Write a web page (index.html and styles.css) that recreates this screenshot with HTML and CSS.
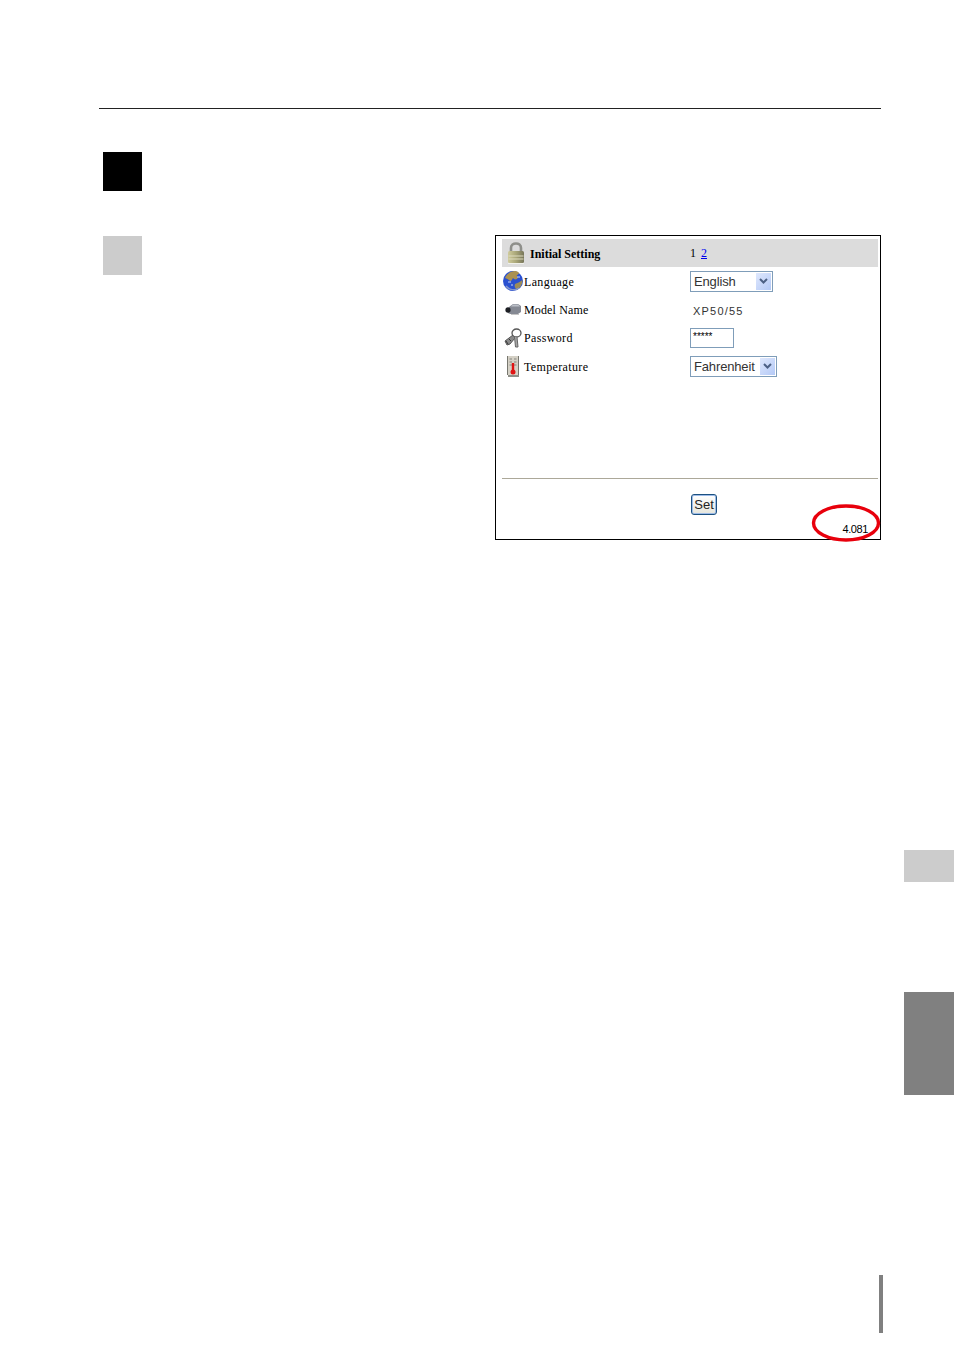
FILE: index.html
```html
<!DOCTYPE html>
<html lang="en">
<head>
    <meta charset="UTF-8">
    <meta name="viewport" content="width=device-width, initial-scale=1.0">
    <title>Initial Setting</title>
    <link rel="stylesheet" href="styles.css">
</head>
<body>
    <div class="page">
        <div class="top-rule"></div>
        <div class="square square-black"></div>

        <div class="step-row">
            <div class="square square-grey"></div>

            <div class="panel">
                <div class="panel-head">
                    <div class="cell-label head-label">
                        <svg class="icon-lock" width="22" height="24" viewBox="0 0 22 24">
                            <defs>
                                <linearGradient id="lockBody" x1="0" y1="0" x2="1" y2="0">
                                    <stop offset="0" stop-color="#cfcb9c"/>
                                    <stop offset="0.5" stop-color="#a9a678"/>
                                    <stop offset="1" stop-color="#77765a"/>
                                </linearGradient>
                            </defs>
                            <path d="M6 11V7c0-6 10-6 10 0v4" fill="none" stroke="#8e8f8a" stroke-width="2.6"/>
                            <rect x="3" y="10" width="16" height="12" rx="1.5" fill="url(#lockBody)"/>
                            <path d="M3.5 15h15M3.5 18h15" stroke="#dedcc0" stroke-width="1"/>
                            <path d="M3 22.5h16" stroke="#f0f0ea" stroke-width="1"/>
                        </svg>
                        <span class="label-text">Initial Setting</span>
                    </div>
                    <div class="pages">1 <a href="#">2</a></div>
                </div>

                <div class="row">
                    <div class="cell-label">
                        <span class="icon-box">
                            <svg width="22" height="22" viewBox="0 0 22 22">
                                <circle cx="11" cy="11" r="10" fill="#2a50d0"/>
                                <path d="M3 8c2-5 8-8 12-6.5 3 1 2 3 0 3.5-1 2 2 2 0 4-2 1-3 0-4-1-1 1-1 3-3 3-1-1-2-2-5-3z" fill="#ab9150"/>
                                <path d="M13 14c2-1 5-2 7.5-4 0 4-2 8-5.500 9.500-2-1-3-3-2-5.500z" fill="#9d8c58"/>
                                <path d="M4 16c3 4 9 5 13 2" fill="none" stroke="#8697cc" stroke-width="1.4"/>
                                <path d="M6 12h3M9 15h2M15 7h3" stroke="#c9d4f5" stroke-width="1"/>
                            </svg>
                        </span>
                        <span class="label-text">Language</span>
                    </div>
                    <div class="select select-language">
                        <span class="select-text">English</span>
                        <span class="select-arrow">
                            <svg width="9" height="6" viewBox="0 0 9 6"><path d="M1 1l3.5 3.5L8 1" fill="none" stroke="#4d6185" stroke-width="2"/></svg>
                        </span>
                    </div>
                </div>

                <div class="row">
                    <div class="cell-label">
                        <span class="icon-box">
                            <svg width="18" height="13" viewBox="0 0 18 13">
                                <path d="M5 4l4-3h5l3 2v6l-3 2H6L4 10z" fill="#858993"/>
                                <path d="M9 1.5h5l2 2H7z" fill="#bcc0c8"/>
                                <ellipse cx="4" cy="7" rx="2.6" ry="2.8" fill="#1d1f24"/>
                                <path d="M7 11.5h8" stroke="#c4c4c4" stroke-width="1"/>
                            </svg>
                        </span>
                        <span class="label-text label-model">Model Name</span>
                    </div>
                    <div class="model-value">XP50/55</div>
                </div>

                <div class="row">
                    <div class="cell-label">
                        <span class="icon-box">
                            <svg width="20" height="20" viewBox="0 0 20 20">
                                <path d="M10 7L2 13l2 4 3-1 5-6" fill="#8a8a8a" stroke="#555" stroke-width="1"/>
                                <ellipse cx="13.5" cy="5" rx="4.5" ry="4" fill="none" stroke="#555" stroke-width="1.3"/>
                                <path d="M11.5 9l1 10H15l-1-10" fill="#a5a5a5" stroke="#666" stroke-width="1"/>
                                <path d="M3 13l2 3M6 11l2 2" stroke="#333" stroke-width="1"/>
                            </svg>
                        </span>
                        <span class="label-text">Password</span>
                    </div>
                    <div class="password-box">*****</div>
                </div>

                <div class="row">
                    <div class="cell-label">
                        <span class="icon-box">
                            <svg width="12" height="21" viewBox="0 0 12 21">
                                <rect x="1" y="0" width="10" height="19" fill="#d5d1c6"/>
                                <rect x="1" y="19" width="11" height="2" fill="#8f8f88"/>
                                <path d="M2.5 3H5M7 3h2.500M2.500 6H5M7 6h2.500M2.500 9H5M7 9h2.500" stroke="#85857e" stroke-width="1"/>
                                <path d="M6 7v9" stroke="#e01414" stroke-width="2.4"/>
                                <circle cx="6" cy="16" r="2.5" fill="#e01414"/>
                                <path d="M11.5 0v19M.5 0v19" stroke="#77776f" stroke-width="1"/>
                            </svg>
                        </span>
                        <span class="label-text">Temperature</span>
                    </div>
                    <div class="select select-temp">
                        <span class="select-text">Fahrenheit</span>
                        <span class="select-arrow">
                            <svg width="9" height="6" viewBox="0 0 9 6"><path d="M1 1l3.5 3.5L8 1" fill="none" stroke="#4d6185" stroke-width="2"/></svg>
                        </span>
                    </div>
                </div>

                <div class="panel-rule"></div>
                <button class="set-btn" type="button">Set</button>
                <div class="version">4.081</div>

                <svg class="version-mark" width="70" height="38" viewBox="0 0 70 38">
                    <ellipse cx="35" cy="19" rx="32.5" ry="17" fill="none" stroke="#e8000c" stroke-width="3.4"/>
                </svg>
            </div>
        </div>

        <div class="side-tabs">
            <div class="tab tab-light"></div>
            <div class="tab tab-dark"></div>
            <div class="page-bar"></div>
        </div>
    </div>
</body>
</html>
```

FILE: styles.css
```css
body {
    margin: 0;
    background: #fff;
    color: #000;
    font-family: "Liberation Serif", serif;
}

.page {
    height: 1351px;
    overflow: hidden;
    padding-top: 108px;
    box-sizing: border-box;
}

.top-rule {
    height: 1px;
    width: 782px;
    margin-left: 99px;
    background: #222;
}

.square {
    width: 39px;
    height: 39px;
    margin-left: 103px;
}

.square-black {
    margin-top: 43px;
    background: #000;
}

.square-grey {
    margin-top: 1px;
    background: #ccc;
}

.step-row {
    display: flex;
    justify-content: space-between;
    width: 881px;
    margin-top: 44px;
}

/* browser screenshot box */
.panel {
    position: relative;
    width: 386px;
    height: 305px;
    box-sizing: border-box;
    border: 1px solid #000;
    padding: 3px 2px 0 6px;
    font-size: 12px;
}

.panel-head, .row {
    display: grid;
    grid-template-columns: 188px 1fr;
    align-items: center;
}

.panel-head {
    height: 28px;
    background: #dcdcdc;
}

.row {
    height: 28.4px;
}

.cell-label {
    display: flex;
    align-items: center;
    letter-spacing: 0.35px;
}

.label-text {
    padding-top: 2px;
}

.label-model {
    letter-spacing: 0.15px;
}

.head-label {
    font-weight: bold;
    letter-spacing: 0;
    padding-left: 3px;
    gap: 3px;
}

.icon-box {
    display: flex;
    justify-content: center;
    align-items: center;
    width: 22px;
    height: 22px;
}

.pages {
    font-size: 12px;
    word-spacing: 2px;
}

.pages a {
    color: #0000ee;
}

.select {
    display: flex;
    align-items: center;
    justify-content: space-between;
    height: 21px;
    box-sizing: border-box;
    border: 1px solid #7f9db9;
    background: #fff;
    padding: 1px;
    font-family: "Liberation Sans", sans-serif;
    font-size: 13px;
    letter-spacing: -0.15px;
    color: #333;
}

.select-language {
    width: 83px;
}

.select-temp {
    width: 87px;
}

.select-text {
    padding-left: 2px;
}

.select-arrow {
    display: flex;
    align-items: center;
    justify-content: center;
    width: 15px;
    height: 17px;
    background: linear-gradient(135deg, #dfe8fd, #b4c9f6);
}

.model-value {
    padding: 2px 0 0 3px;
    font-family: "Liberation Sans", sans-serif;
    font-size: 11px;
    letter-spacing: 1.2px;
    color: #333;
}

.password-box {
    width: 44px;
    height: 20px;
    box-sizing: border-box;
    border: 1px solid #7f9db9;
    padding: 3px 0 0 2px;
    font-family: "Liberation Sans", sans-serif;
    font-size: 10px;
    line-height: 10px;
}

.panel-rule {
    height: 1px;
    margin-top: 97px;
    background: #aca899;
}

.set-btn {
    display: block;
    width: 26px;
    height: 21px;
    margin: 15px 0 0 189px;
    padding: 0;
    border: 1px solid #1c5180;
    border-radius: 3px;
    background: linear-gradient(#fff, #e6e6dc);
    box-shadow: inset 0 0 0 1px #9dbbe8;
    font-family: "Liberation Sans", sans-serif;
    font-size: 13px;
    color: #222;
}

.version {
    margin-top: 8px;
    padding-right: 10px;
    text-align: right;
    font-family: "Liberation Sans", sans-serif;
    font-size: 11px;
    letter-spacing: -0.4px;
}

.version-mark {
    position: absolute;
    left: 315px;
    top: 268px;
}

.side-tabs {
    display: flex;
    flex-direction: column;
    align-items: flex-end;
    margin-top: 310px;
}

.tab {
    width: 50px;
}

.tab-light {
    height: 32px;
    background: #ccc;
}

.tab-dark {
    height: 103px;
    margin-top: 110px;
    background: #808080;
}

.page-bar {
    width: 4px;
    height: 58px;
    margin: 180px 71px 0 0;
    background: #808080;
}
```
